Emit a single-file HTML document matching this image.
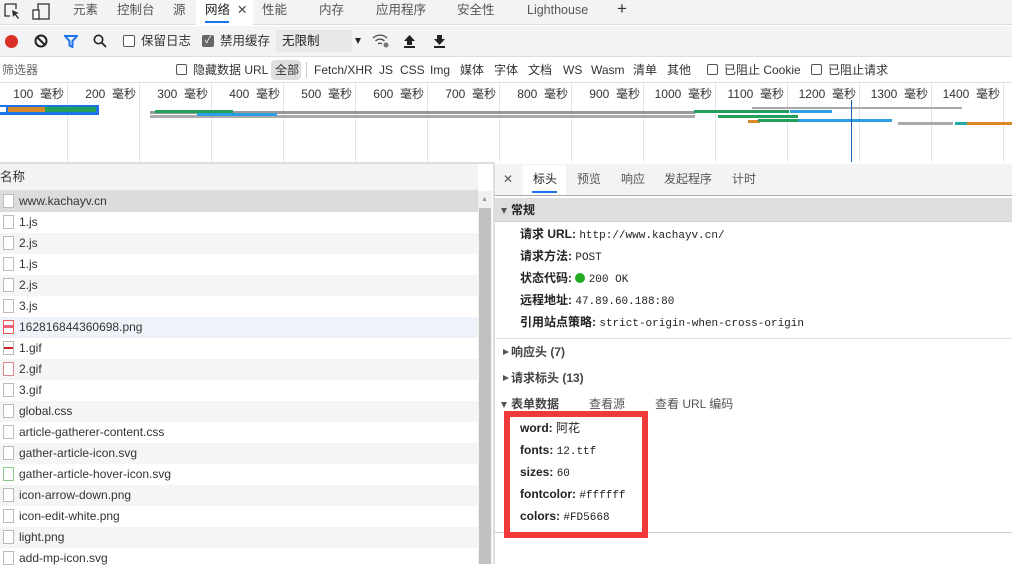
<!DOCTYPE html>
<html><head><meta charset="utf-8"><style>
*{box-sizing:border-box;margin:0;padding:0}
body{width:1012px;height:564px;overflow:hidden;background:#fff;font-family:"Liberation Sans","Noto Sans CJK SC",sans-serif;font-size:12px;line-height:16px;color:#333;position:relative}
.a{position:absolute}
.mono{font-family:"Liberation Mono","Noto Sans CJK SC",monospace;font-size:11px}
.tab{position:absolute;top:2px;color:#555;font-size:12.5px}
.row{position:absolute;left:0;width:478px;height:21px;line-height:21px;padding-left:19px;color:#333}
.ic{position:absolute;left:3px;top:3px;width:11px;height:14px;border:1px solid #bbb;background:#fff}
.gl{position:absolute;top:83px;height:79px;width:1px;background:#e4e4e4}
.tl{position:absolute;top:86px;font-size:12px;color:#333;text-align:right;width:70px}
.bar{position:absolute;height:3px}
.hd{position:absolute;left:520px;font-weight:bold;color:#222}
.tri{position:absolute;width:0;height:0;border-left:6px solid #555;border-top:3.5px solid transparent;border-bottom:3.5px solid transparent}
.trd{position:absolute;width:0;height:0;border-top:6px solid #555;border-left:3.5px solid transparent;border-right:3.5px solid transparent}
</style></head><body>
<!-- tab bar -->
<div class="a" style="left:0;top:0;width:1012px;height:25px;background:#f1f3f4;border-bottom:1px solid #ddd"></div>
<svg class="a" style="left:3px;top:2px" width="50" height="20"><path d="M2 2h11v5M2 2v12h5" fill="none" stroke="#333" stroke-width="1.3"/><path d="M9 8l7 3-3 1 3 4-1 1-3-4-2 2z" fill="#333"/><rect x="35" y="2" width="11" height="15" fill="none" stroke="#333" stroke-width="1.3"/><rect x="30" y="8" width="6" height="9" fill="#fff" stroke="#333" stroke-width="1.3"/></svg>
<div class="tab" style="left:73px">元素</div>
<div class="tab" style="left:117px">控制台</div>
<div class="tab" style="left:173px">源</div>
<div class="a" style="left:196px;top:0;width:57px;height:25px;background:#fff"></div>
<div class="tab" style="left:205px;color:#222">网络</div>
<div class="tab" style="left:237px;color:#444">✕</div>
<div class="a" style="left:205px;top:21px;width:24px;height:2px;background:#1a73e8"></div>
<div class="tab" style="left:262px">性能</div>
<div class="tab" style="left:319px">内存</div>
<div class="tab" style="left:376px">应用程序</div>
<div class="tab" style="left:457px">安全性</div>
<div class="tab" style="left:527px">Lighthouse</div>
<div class="tab" style="left:617px;font-size:17px;top:1px;color:#333">+</div>
<!-- toolbar -->
<div class="a" style="left:0;top:26px;width:1012px;height:31px;background:#f1f3f4;border-bottom:1px solid #ddd"></div>
<div class="a" style="left:5px;top:35px;width:13px;height:13px;border-radius:50%;background:#d93025"></div>
<svg class="a" style="left:34px;top:34px" width="14" height="14"><circle cx="7" cy="7" r="5.5" fill="none" stroke="#222" stroke-width="2"/><path d="M3 3l8 8" stroke="#222" stroke-width="2"/></svg>
<svg class="a" style="left:64px;top:35px" width="14" height="13"><path d="M1 1h12l-4.5 5v6l-3-1.5V6z" fill="none" stroke="#1a73e8" stroke-width="2"/></svg>
<svg class="a" style="left:93px;top:34px" width="14" height="14"><circle cx="5.5" cy="5.5" r="4.2" fill="none" stroke="#222" stroke-width="1.6"/><path d="M8.5 8.5l4.5 4.5" stroke="#222" stroke-width="1.8"/></svg>
<div class="a" style="left:123px;top:35px;width:12px;height:12px;border:1px solid #555;border-radius:2px;background:#fff"></div>
<div class="a" style="left:141px;top:33px;font-size:12.5px">保留日志</div>
<div class="a" style="left:202px;top:35px;width:12px;height:12px;border-radius:2px;background:#666;color:#fff;font-size:10px;line-height:12px;text-align:center">✓</div>
<div class="a" style="left:220px;top:33px;font-size:12.5px">禁用缓存</div>
<div class="a" style="left:276px;top:30px;width:76px;height:22px;background:#e8e8e8"></div>
<div class="a" style="left:282px;top:33px;font-size:12.5px;color:#222">无限制</div>
<div class="trd" style="left:355px;top:38px;border-top-color:#222"></div>
<svg class="a" style="left:372px;top:33px" width="18" height="16"><path d="M1 5a10 10 0 0 1 14 0M3.5 8a6.5 6.5 0 0 1 9 0M6 11a3 3 0 0 1 4 0" fill="none" stroke="#555" stroke-width="1.4"/><circle cx="14" cy="12" r="2.5" fill="#777"/></svg>
<svg class="a" style="left:403px;top:34px" width="13" height="14"><path d="M6.5 1L12 7H9v4H4V7H1z" fill="#222"/><rect x="1" y="12" width="11" height="2" fill="#222"/></svg>
<svg class="a" style="left:433px;top:34px" width="13" height="14"><path d="M6.5 11L12 5H9V1H4v4H1z" fill="#222"/><rect x="1" y="12" width="11" height="2" fill="#222"/></svg>
<!-- filter row -->
<div class="a" style="left:0;top:58px;width:1012px;height:25px;background:#fff;border-bottom:1px solid #ddd"></div>
<div class="a" style="left:2px;top:62px;color:#666;font-size:12px">筛选器</div>
<div class="a" style="left:176px;top:64px;width:11px;height:11px;border:1px solid #555;border-radius:2px"></div>
<div class="a" style="left:193px;top:62px;font-size:12px">隐藏数据 URL</div>
<div class="a" style="left:271px;top:60px;width:30px;height:20px;border-radius:4px;background:#dedede"></div>
<div class="a" style="left:275px;top:62px;font-size:12px">全部</div>
<div class="a" style="left:306px;top:62px;width:1px;height:16px;background:#ccc"></div>
<div class="a" style="left:314px;top:62px;font-size:12px;white-space:nowrap">Fetch/XHR</div>
<div class="a" style="left:379px;top:62px">JS</div>
<div class="a" style="left:400px;top:62px">CSS</div>
<div class="a" style="left:430px;top:62px">Img</div>
<div class="a" style="left:460px;top:62px">媒体</div>
<div class="a" style="left:494px;top:62px">字体</div>
<div class="a" style="left:528px;top:62px">文档</div>
<div class="a" style="left:563px;top:62px">WS</div>
<div class="a" style="left:591px;top:62px">Wasm</div>
<div class="a" style="left:633px;top:62px">清单</div>
<div class="a" style="left:667px;top:62px">其他</div>
<div class="a" style="left:707px;top:64px;width:11px;height:11px;border:1px solid #555;border-radius:2px"></div>
<div class="a" style="left:724px;top:62px;font-size:12px">已阻止 Cookie</div>
<div class="a" style="left:811px;top:64px;width:11px;height:11px;border:1px solid #555;border-radius:2px"></div>
<div class="a" style="left:828px;top:62px;font-size:12px">已阻止请求</div>
<!-- timeline -->
<div class="gl" style="left:67px"></div><div class="gl" style="left:139px"></div><div class="gl" style="left:211px"></div><div class="gl" style="left:283px"></div><div class="gl" style="left:355px"></div><div class="gl" style="left:427px"></div><div class="gl" style="left:499px"></div><div class="gl" style="left:571px"></div><div class="gl" style="left:643px"></div><div class="gl" style="left:715px"></div><div class="gl" style="left:787px"></div><div class="gl" style="left:859px"></div><div class="gl" style="left:931px"></div><div class="gl" style="left:1003px"></div>
<div class="tl" style="left:-6px">100&nbsp;&nbsp;毫秒</div><div class="tl" style="left:66px">200&nbsp;&nbsp;毫秒</div><div class="tl" style="left:138px">300&nbsp;&nbsp;毫秒</div><div class="tl" style="left:210px">400&nbsp;&nbsp;毫秒</div><div class="tl" style="left:282px">500&nbsp;&nbsp;毫秒</div><div class="tl" style="left:354px">600&nbsp;&nbsp;毫秒</div><div class="tl" style="left:426px">700&nbsp;&nbsp;毫秒</div><div class="tl" style="left:498px">800&nbsp;&nbsp;毫秒</div><div class="tl" style="left:570px">900&nbsp;&nbsp;毫秒</div><div class="tl" style="left:642px">1000&nbsp;&nbsp;毫秒</div><div class="tl" style="left:714px">1100&nbsp;&nbsp;毫秒</div><div class="tl" style="left:786px">1200&nbsp;&nbsp;毫秒</div><div class="tl" style="left:858px">1300&nbsp;&nbsp;毫秒</div><div class="tl" style="left:930px">1400&nbsp;&nbsp;毫秒</div>
<div class="a" style="left:0;top:105px;width:99px;height:10px;background:#1a73e8"></div>
<div class="a" style="left:0;top:107px;width:6px;height:5px;background:#fff"></div>
<div class="a" style="left:8px;top:107px;width:37px;height:5px;background:#d9892a"></div>
<div class="a" style="left:45px;top:107px;width:51px;height:5px;background:#20a05a"></div>
<div class="bar" style="left:150px;top:111px;width:545px;background:#999"></div>
<div class="bar" style="left:150px;top:115px;width:545px;background:#aaa"></div>
<div class="bar" style="left:155px;top:110px;width:78px;background:#20a05a"></div>
<div class="bar" style="left:197px;top:113px;width:80px;background:#2a9ee0"></div>
<div class="bar" style="left:694px;top:110px;width:95px;background:#20a05a"></div>
<div class="bar" style="left:790px;top:110px;width:42px;background:#2a9ee0"></div>
<div class="bar" style="left:718px;top:115px;width:80px;background:#20a05a"></div>
<div class="bar" style="left:752px;top:107px;width:210px;background:#aaa;height:2px"></div>
<div class="bar" style="left:748px;top:120px;width:12px;background:#d9892a"></div>
<div class="bar" style="left:758px;top:119px;width:40px;background:#20a05a"></div>
<div class="bar" style="left:798px;top:119px;width:94px;background:#2a9ee0"></div>
<div class="bar" style="left:898px;top:122px;width:55px;background:#aaa"></div>
<div class="bar" style="left:955px;top:122px;width:12px;background:#2aa"></div>
<div class="bar" style="left:967px;top:122px;width:45px;background:#d9892a"></div>
<div class="a" style="left:851px;top:100px;width:1px;height:62px;background:#1a5fb4"></div>
<!-- list -->
<div class="a" style="left:0;top:162px;width:494px;height:2px;background:#ddd"></div>
<div class="a" style="left:0;top:164px;width:478px;height:27px;background:#f3f3f3;border-bottom:1px solid #ddd"></div>
<div class="a" style="left:0;top:169px;font-size:12.5px">名称</div>
<div class="row" style="top:191px;background:#dcdcdc"><i class="ic"></i>www.kachayv.cn</div>
<div class="row" style="top:212px"><i class="ic"></i>1.js</div>
<div class="row" style="top:233px;background:#f5f5f5"><i class="ic"></i>2.js</div>
<div class="row" style="top:254px"><i class="ic"></i>1.js</div>
<div class="row" style="top:275px;background:#f5f5f5"><i class="ic"></i>2.js</div>
<div class="row" style="top:296px"><i class="ic"></i>3.js</div>
<div class="row" style="top:317px;background:#eef3fa"><i class="ic" style="border-color:#e55"></i><i class="a" style="left:4px;top:8px;width:9px;height:3px;background:#f06080"></i>162816844360698.png</div>
<div class="row" style="top:338px"><i class="ic"></i><i class="a" style="left:4px;top:9px;width:9px;height:2px;background:#c22"></i>1.gif</div>
<div class="row" style="top:359px;background:#f5f5f5"><i class="ic" style="border-color:#d88"></i>2.gif</div>
<div class="row" style="top:380px"><i class="ic"></i>3.gif</div>
<div class="row" style="top:401px;background:#f5f5f5"><i class="ic"></i>global.css</div>
<div class="row" style="top:422px"><i class="ic"></i>article-gatherer-content.css</div>
<div class="row" style="top:443px;background:#f5f5f5"><i class="ic"></i>gather-article-icon.svg</div>
<div class="row" style="top:464px"><i class="ic" style="border-color:#8c8"></i>gather-article-hover-icon.svg</div>
<div class="row" style="top:485px;background:#f5f5f5"><i class="ic"></i>icon-arrow-down.png</div>
<div class="row" style="top:506px"><i class="ic"></i>icon-edit-white.png</div>
<div class="row" style="top:527px;background:#f5f5f5"><i class="ic"></i>light.png</div>
<div class="row" style="top:548px"><i class="ic"></i>add-mp-icon.svg</div>
<div class="a" style="left:478px;top:191px;width:14px;height:373px;background:#f1f1f1"></div>
<div class="a" style="left:479px;top:208px;width:12px;height:356px;background:#c1c1c1"></div>
<div class="a" style="left:481px;top:196px;font-size:7px;line-height:8px;color:#999">▲</div>
<div class="a" style="left:493px;top:162px;width:2px;height:402px;background:#ddd"></div>
<!-- right panel -->
<div class="a" style="left:495px;top:164px;width:517px;height:32px;background:#f3f3f3;border-bottom:1px solid #aaa"></div>
<div class="a" style="left:503px;top:171px;color:#555">✕</div>
<div class="a" style="left:523px;top:165px;width:43px;height:30px;background:#fff"></div>
<div class="a" style="left:533px;top:171px;color:#222">标头</div>
<div class="a" style="left:532px;top:191px;width:25px;height:2px;background:#1a73e8"></div>
<div class="a" style="left:577px;top:171px;color:#555">预览</div>
<div class="a" style="left:621px;top:171px;color:#555">响应</div>
<div class="a" style="left:664px;top:171px;color:#555">发起程序</div>
<div class="a" style="left:732px;top:171px;color:#555">计时</div>
<div class="a" style="left:495px;top:198px;width:517px;height:24px;background:#dedede;border-bottom:1px solid #ccc"></div>
<div class="trd" style="left:501px;top:208px"></div>
<div class="a" style="left:511px;top:202px;font-weight:bold;color:#222">常规</div>
<div class="hd" style="top:226px">请求 URL: <span class="mono" style="font-weight:normal">http://www.kachayv.cn/</span></div>
<div class="hd" style="top:248px">请求方法: <span class="mono" style="font-weight:normal">POST</span></div>
<div class="hd" style="top:270px">状态代码: <span style="display:inline-block;width:10px;height:10px;border-radius:50%;background:#22aa22;vertical-align:-1px"></span> <span class="mono" style="font-weight:normal">200 OK</span></div>
<div class="hd" style="top:292px">远程地址: <span class="mono" style="font-weight:normal">47.89.60.188:80</span></div>
<div class="hd" style="top:314px">引用站点策略: <span class="mono" style="font-weight:normal">strict-origin-when-cross-origin</span></div>
<div class="a" style="left:495px;top:338px;width:517px;height:1px;background:#ddd"></div>
<div class="tri" style="left:503px;top:349px"></div>
<div class="a" style="left:511px;top:344px;font-weight:bold;color:#444">响应头 (7)</div>
<div class="tri" style="left:503px;top:375px"></div>
<div class="a" style="left:511px;top:370px;font-weight:bold;color:#444">请求标头 (13)</div>
<div class="trd" style="left:501px;top:402px"></div>
<div class="a" style="left:511px;top:396px;font-weight:bold;color:#444">表单数据</div>
<div class="a" style="left:589px;top:396px;color:#555">查看源</div>
<div class="a" style="left:655px;top:396px;color:#555">查看 URL 编码</div>
<div class="a" style="left:495px;top:532px;width:517px;height:1px;background:#ccc"></div>
<div class="a" style="left:504px;top:411px;width:144px;height:127px;border:6px solid #f03a3a;background:#fff"></div>
<div class="hd" style="top:420px">word: <span style="font-weight:normal">阿花</span></div>
<div class="hd" style="top:442px">fonts: <span class="mono" style="font-weight:normal">12.ttf</span></div>
<div class="hd" style="top:464px">sizes: <span class="mono" style="font-weight:normal">60</span></div>
<div class="hd" style="top:486px">fontcolor: <span class="mono" style="font-weight:normal">#ffffff</span></div>
<div class="hd" style="top:508px">colors: <span class="mono" style="font-weight:normal">#FD5668</span></div>
</body></html>
